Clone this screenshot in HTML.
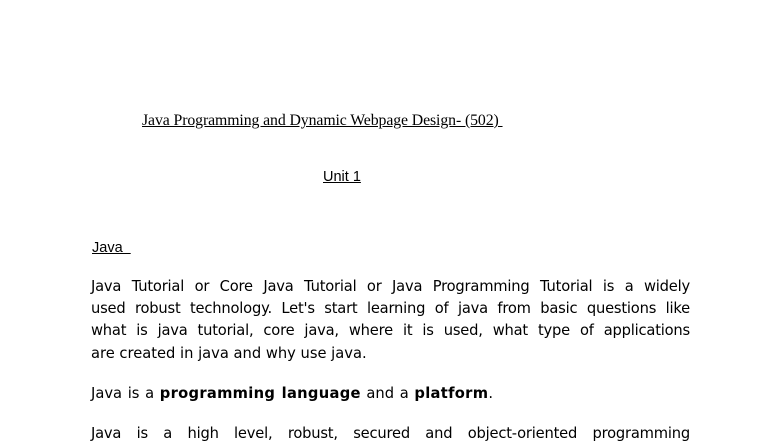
<!DOCTYPE html>
<html><head><meta charset="utf-8"><style>
body{margin:0;width:784px;height:441px;background:#fff;overflow:hidden;position:relative;color:#000}
.a{position:absolute;white-space:nowrap}
.t{left:142px;top:112px;font:15.8px "Liberation Serif",serif;text-decoration:underline;letter-spacing:-0.1px}
.u{left:323px;top:169px;font:14.5px "Liberation Sans",sans-serif;text-decoration:underline}
.j{left:92px;top:240px;font:14.5px "Liberation Sans",sans-serif;text-decoration:underline}
.l{position:absolute;left:91px;width:599px;font:14.7px "DejaVu Sans",Verdana,sans-serif;text-align:justify;text-align-last:justify;white-space:nowrap;height:20px;line-height:20px;letter-spacing:-0.2px;word-spacing:-1px}
.n{text-align-last:left;text-align:left;word-spacing:1px;letter-spacing:0}
.n b{letter-spacing:0.3px}
</style></head><body>
<div class="a t">Java Programming and Dynamic Webpage Design- (502)&nbsp;</div>
<div class="a u">Unit 1</div>
<div class="a j">Java&nbsp;&nbsp;</div>
<div class="l" style="top:277px">Java Tutorial or Core Java Tutorial or Java Programming Tutorial is a widely</div>
<div class="l" style="top:299px">used robust technology. Let's start learning of java from basic questions like</div>
<div class="l" style="top:321px">what is java tutorial, core java, where it is used, what type of applications</div>
<div class="l n" style="top:344px;word-spacing:0">are created in java and why use java.</div>
<div class="l n" style="top:384px">Java is a <b>programming language</b> and a <b>platform</b>.</div>
<div class="l" style="top:424px">Java is a high level, robust, secured and object-oriented programming</div>
</body></html>
